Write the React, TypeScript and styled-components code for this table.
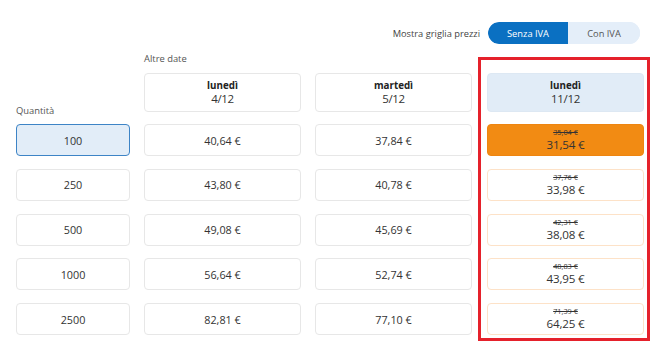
import React from "react";
import styled, { createGlobalStyle, css } from "styled-components";

const GlobalStyle = createGlobalStyle`
  html, body { margin: 0; padding: 0; background: #ffffff; }
  body { font-family: "Open Sans", "Noto Sans", Arial, sans-serif; color: #333333; }
  * { box-sizing: border-box; }
`;

const Page = styled.div`
  width: 657px;
  height: 343px;
  padding: 22px 17px 0 16px;
  overflow: hidden;
`;

const TopBar = styled.div`
  display: flex;
  justify-content: flex-end;
  align-items: center;
  gap: 8px;
  height: 22px;
`;

const TopLabel = styled.span`
  font-size: 9.3px;
  color: #444444;
`;

const Toggle = styled.div`
  display: flex;
  height: 22px;
  border-radius: 11px;
  overflow: hidden;
  background: #e4eef9;
`;

const ToggleOption = styled.button<{ $active?: boolean }>`
  border: none;
  margin: 0;
  height: 22px;
  padding: 0;
  font-family: inherit;
  font-size: 9.3px;
  cursor: pointer;
  ${(p) =>
    p.$active
      ? css`
          width: 80px;
          background: #0a70c2;
          color: #ffffff;
          border-radius: 11px 0 0 11px;
        `
      : css`
          width: 72px;
          background: #e4eef9;
          color: #555555;
        `}
`;

const Table = styled.div`
  display: flex;
  align-items: flex-start;
  margin-top: 7.5px;
  width: 634px;
  & > * { flex-shrink: 0; }
`;

const QtyColumn = styled.div`
  display: flex;
  flex-direction: column;
  width: 114px;
  padding-top: 52.5px;
`;

const Label = styled.div`
  font-size: 9.4px;
  line-height: 14px;
  height: 14px;
  color: #555555;
  white-space: nowrap;
`;

const QtyLabel = styled(Label)`
  margin-bottom: 6px;
`;

const Stack = styled.div`
  display: flex;
  flex-direction: column;
  gap: 12.75px;
`;

const Cell = styled.div<{ $variant?: "qtyActive" | "best" | "offer" }>`
  height: 32px;
  border: 1px solid #e7e7e7;
  border-radius: 4px;
  background: #ffffff;
  display: flex;
  flex-direction: column;
  align-items: center;
  justify-content: center;
  font-size: 10.8px;
  color: #333333;
  ${(p) =>
    p.$variant === "qtyActive" &&
    css`
      background: #e2edf8;
      border: 1.5px solid #3d84c6;
    `}
  ${(p) =>
    p.$variant === "best" &&
    css`
      background: #f28b13;
      border-color: #ee8510;
    `}
  ${(p) =>
    p.$variant === "offer" &&
    css`
      border-color: #fde2c8;
    `}
`;

const DatesGroup = styled.div`
  display: flex;
  flex-direction: column;
  margin-left: 14px;
`;

const DatesLabel = styled(Label)`
  margin-bottom: 7px;
`;

const DatesRow = styled.div`
  display: flex;
  gap: 14px;
`;

const DateColumn = styled.div`
  display: flex;
  flex-direction: column;
  width: 157px;
  flex-shrink: 0;
`;

const DateHeader = styled.div<{ $selected?: boolean }>`
  height: 39px;
  margin-bottom: 12.5px;
  border: 1px solid ${(p) => (p.$selected ? "#dde8f3" : "#e7e7e7")};
  border-radius: 4px;
  background: ${(p) => (p.$selected ? "#e1ecf7" : "#ffffff")};
  display: flex;
  flex-direction: column;
  align-items: center;
  justify-content: center;
  color: #333333;
`;

const DayName = styled.div`
  font-size: 9.8px;
  font-weight: 700;
  line-height: 12px;
  color: #222222;
`;

const DayDate = styled.div`
  font-size: 11.5px;
  line-height: 13px;
  letter-spacing: -0.3px;
`;

const Selected = styled.div`
  display: flex;
  flex-direction: column;
  margin-left: 6px;
  margin-top: 5.5px;
  width: 172px;
  border: 3px solid #e5212b;
  padding: 12.5px 3px 3px 6px;
`;

const OldPrice = styled.div`
  font-size: 7.3px;
  line-height: 10px;
  height: 10px;
  text-decoration: line-through;
  color: #333333;
`;

const NewPrice = styled.div`
  font-size: 11.6px;
  line-height: 16px;
  height: 16px;
  letter-spacing: -0.2px;
  color: #333333;
`;

const quantities = ["100", "250", "500", "1000", "2500"];

const otherDates = [
  { day: "lunedì", date: "4/12", prices: ["40,64 €", "43,80 €", "49,08 €", "56,64 €", "82,81 €"] },
  { day: "martedì", date: "5/12", prices: ["37,84 €", "40,78 €", "45,69 €", "52,74 €", "77,10 €"] },
];

const selectedPrices = [
  { old: "35,04 €", now: "31,54 €" },
  { old: "37,76 €", now: "33,98 €" },
  { old: "42,31 €", now: "38,08 €" },
  { old: "48,83 €", now: "43,95 €" },
  { old: "71,39 €", now: "64,25 €" },
];

export default function App() {
  return (
    <>
      <GlobalStyle />
      <Page>
        <TopBar>
          <TopLabel>Mostra griglia prezzi</TopLabel>
          <Toggle>
            <ToggleOption $active>Senza IVA</ToggleOption>
            <ToggleOption>Con IVA</ToggleOption>
          </Toggle>
        </TopBar>
        <Table>
          <QtyColumn>
            <QtyLabel>Quantità</QtyLabel>
            <Stack>
              {quantities.map((q, i) => (
                <Cell key={q} $variant={i === 0 ? "qtyActive" : undefined}>
                  {q}
                </Cell>
              ))}
            </Stack>
          </QtyColumn>
          <DatesGroup>
            <DatesLabel>Altre date</DatesLabel>
            <DatesRow>
              {otherDates.map((d) => (
                <DateColumn key={d.date}>
                  <DateHeader>
                    <DayName>{d.day}</DayName>
                    <DayDate>{d.date}</DayDate>
                  </DateHeader>
                  <Stack>
                    {d.prices.map((p) => (
                      <Cell key={p}>{p}</Cell>
                    ))}
                  </Stack>
                </DateColumn>
              ))}
            </DatesRow>
          </DatesGroup>
          <Selected>
            <DateColumn>
              <DateHeader $selected>
                <DayName>lunedì</DayName>
                <DayDate>11/12</DayDate>
              </DateHeader>
              <Stack>
                {selectedPrices.map((p, i) => (
                  <Cell key={p.now} $variant={i === 0 ? "best" : "offer"}>
                    <OldPrice>{p.old}</OldPrice>
                    <NewPrice>{p.now}</NewPrice>
                  </Cell>
                ))}
              </Stack>
            </DateColumn>
          </Selected>
        </Table>
      </Page>
    </>
  );
}
